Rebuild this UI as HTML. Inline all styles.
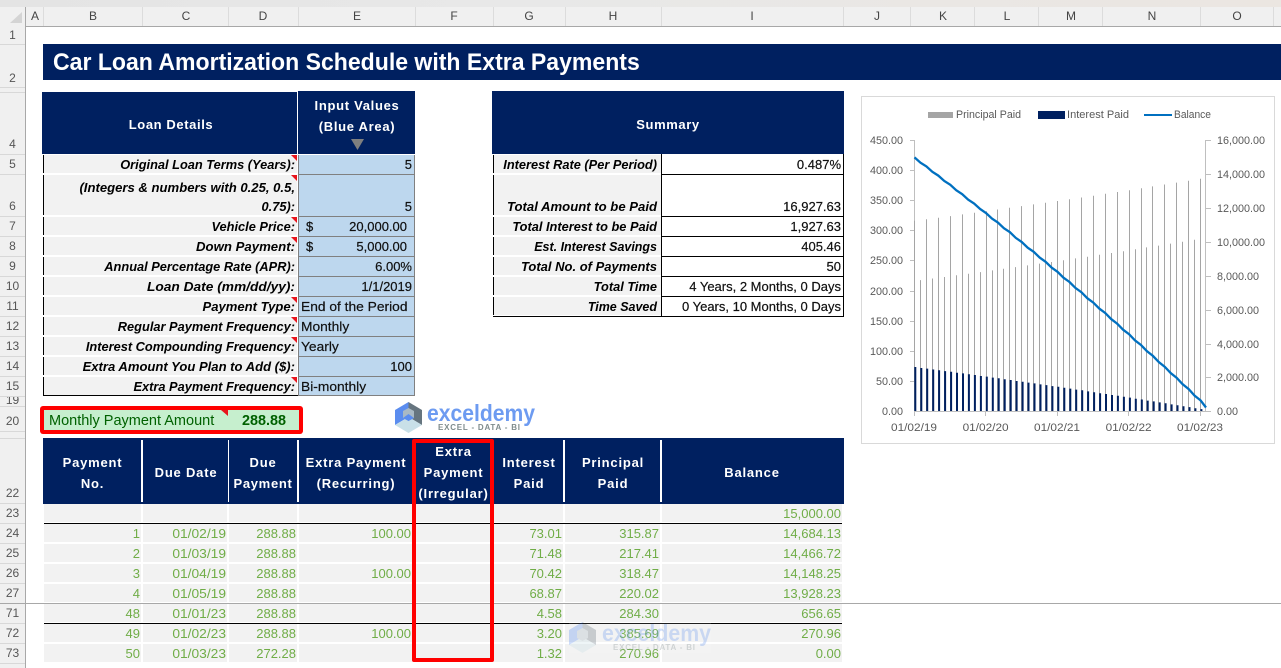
<!DOCTYPE html>
<html><head><meta charset="utf-8"><style>
html,body{margin:0;padding:0;background:#fff}
#p{position:relative;width:1281px;height:668px;overflow:hidden;background:#fff;font-family:"Liberation Sans",sans-serif;font-size:13px;color:#000}
#p div{position:absolute}
.t{white-space:pre;line-height:22px;height:20px}
.r{transform-origin:100% 50%;transform:translateX(-100%)}
.c{transform-origin:50% 50%;transform:translateX(-50%)}
.l{transform-origin:0 50%}
.bi{font-weight:bold;font-style:italic;transform:translateX(-100%) scaleX(.985)}
.g{color:#70ad47}
.d{transform:translateX(-100%) scaleX(1.06)}
.h{color:#fff;font-weight:bold;letter-spacing:.8px}
.hh{color:#fff;font-weight:bold;letter-spacing:.6px}
.ch{color:#444;font-size:12px;top:7px;height:19px;line-height:19px;transform:translateX(-50%)}
.rn{color:#555;font-size:12px;left:0;width:25px;text-align:center;height:16px;line-height:16px}
.hs{top:7px;width:1px;height:19px;background:#dcdcdc}
.rs{left:0;width:25px;height:1px;background:#d8d8d8}
.lb{left:43px;width:253px;background:#f2f2f2;border-left:1px solid #000;height:18px}
.bl{left:299px;width:115px;height:1px;background:#808080}
.sb{left:493px;width:167px;background:#f2f2f2;border-left:1px solid #000;height:18px}
.sl{left:661px;width:183px;height:1px;background:#000}
.v{font-size:13px;color:#111;-webkit-text-stroke:.2px #111}
</style></head><body><div id="p">

<div style="left:0;top:0;width:1281px;height:7px;background:linear-gradient(90deg,#e4e4e4,#e8e8e8 40%,#ebe6e1)"></div>
<div style="left:0;top:7px;width:1281px;height:19px;background:#f0f0f0"></div>
<div style="left:0;top:26px;width:1281px;height:1px;background:#a8a8a8"></div>
<div style="left:0;top:7px;width:25px;height:661px;background:#f0f0f0"></div>
<div style="left:25px;top:7px;width:1px;height:661px;background:#a8a8a8"></div>
<svg style="position:absolute;left:8px;top:11px" width="16" height="13"><polygon points="14,1 14,12 2,12" fill="#d4d4d4"/></svg>

<div class="hs" style="left:43px"></div><div class="hs" style="left:142px"></div><div class="hs" style="left:228px"></div><div class="hs" style="left:298px"></div><div class="hs" style="left:415px"></div><div class="hs" style="left:493px"></div><div class="hs" style="left:565px"></div><div class="hs" style="left:661px"></div><div class="hs" style="left:843px"></div><div class="hs" style="left:910px"></div><div class="hs" style="left:974px"></div><div class="hs" style="left:1038px"></div><div class="hs" style="left:1102px"></div><div class="hs" style="left:1200px"></div><div class="hs" style="left:1273px"></div>
<div class="ch" style="left:35px">A</div><div class="ch" style="left:93px">B</div><div class="ch" style="left:186px">C</div><div class="ch" style="left:263px">D</div><div class="ch" style="left:357px">E</div><div class="ch" style="left:454px">F</div><div class="ch" style="left:529px">G</div><div class="ch" style="left:613px">H</div><div class="ch" style="left:752px">I</div><div class="ch" style="left:877px">J</div><div class="ch" style="left:943px">K</div><div class="ch" style="left:1007px">L</div><div class="ch" style="left:1071px">M</div><div class="ch" style="left:1152px">N</div><div class="ch" style="left:1237px">O</div>

<div class="rs" style="top:44px"></div><div class="rs" style="top:87px"></div><div class="rs" style="top:92px"></div><div class="rs" style="top:154px"></div><div class="rs" style="top:174px"></div><div class="rs" style="top:216px"></div><div class="rs" style="top:236px"></div><div class="rs" style="top:256px"></div><div class="rs" style="top:276px"></div><div class="rs" style="top:296px"></div><div class="rs" style="top:316px"></div><div class="rs" style="top:336px"></div><div class="rs" style="top:356px"></div><div class="rs" style="top:376px"></div><div class="rs" style="top:396px"></div><div class="rs" style="top:406px"></div><div class="rs" style="top:431px"></div><div class="rs" style="top:438px"></div><div class="rs" style="top:503px"></div><div class="rs" style="top:523px"></div><div class="rs" style="top:543px"></div><div class="rs" style="top:563px"></div><div class="rs" style="top:583px"></div><div class="rs" style="top:623px"></div><div class="rs" style="top:643px"></div><div class="rs" style="top:663px"></div>
<div class="rn" style="top:27px">1</div><div class="rn" style="top:70px">2</div><div class="rn" style="top:136px">4</div><div class="rn" style="top:156px">5</div><div class="rn" style="top:198px">6</div><div class="rn" style="top:218px">7</div><div class="rn" style="top:238px">8</div><div class="rn" style="top:258px">9</div><div class="rn" style="top:278px">10</div><div class="rn" style="top:298px">11</div><div class="rn" style="top:318px">12</div><div class="rn" style="top:338px">13</div><div class="rn" style="top:358px">14</div><div class="rn" style="top:378px">15</div><div class="rn" style="top:397px;height:9px;line-height:7px;overflow:hidden">19</div><div class="rn" style="top:413px">20</div><div class="rn" style="top:485px">22</div><div class="rn" style="top:505px">23</div><div class="rn" style="top:525px">24</div><div class="rn" style="top:545px">25</div><div class="rn" style="top:565px">26</div><div class="rn" style="top:585px">27</div><div class="rn" style="top:605px">71</div><div class="rn" style="top:625px">72</div><div class="rn" style="top:645px">73</div>

<!-- title -->
<div style="left:43px;top:44px;width:1238px;height:36px;background:#002060"></div>
<div class="t l" style="left:53px;top:48px;height:30px;line-height:30px;font-size:24px;font-weight:bold;color:#fff;transform:scaleX(.96)">Car Loan Amortization Schedule with Extra Payments</div>

<!-- loan details -->
<div style="left:42px;top:92px;width:255px;height:62px;background:#002060"></div>
<div style="left:298px;top:91px;width:117px;height:63px;background:#002060"></div>
<div class="t c hh" style="left:171px;top:114px">Loan Details</div>
<div class="t c hh" style="left:357px;top:95px;letter-spacing:.7px">Input Values</div>
<div class="t c hh" style="left:357px;top:116px;letter-spacing:.7px">(Blue Area)</div>
<svg style="position:absolute;left:350px;top:139px" width="15" height="11"><polygon points="1,0 14,0 7.5,11" fill="#7f7f7f"/></svg>

<div class="lb" style="top:155px"></div><div class="lb" style="top:175px;height:40px"></div><div class="lb" style="top:217px"></div><div class="lb" style="top:237px"></div><div class="lb" style="top:257px"></div><div class="lb" style="top:277px"></div><div class="lb" style="top:297px"></div><div class="lb" style="top:317px"></div><div class="lb" style="top:337px"></div><div class="lb" style="top:357px"></div><div class="lb" style="top:377px"></div>
<div style="left:43px;top:395px;width:255px;height:1px;background:#000"></div>
<div style="left:299px;top:155px;width:115px;height:241px;background:#bdd7ee"></div>
<div style="left:298px;top:155px;width:1px;height:241px;background:#808080"></div>
<div style="left:414px;top:155px;width:1px;height:241px;background:#808080"></div>
<div class="bl" style="top:174px"></div><div class="bl" style="top:216px"></div><div class="bl" style="top:236px"></div><div class="bl" style="top:256px"></div><div class="bl" style="top:276px"></div><div class="bl" style="top:296px"></div><div class="bl" style="top:316px"></div><div class="bl" style="top:336px"></div><div class="bl" style="top:356px"></div><div class="bl" style="top:376px"></div><div class="bl" style="top:395px"></div>

<div class="t r bi" style="left:295px;top:154px">Original Loan Terms (Years):</div>
<div class="t r bi" style="left:295px;top:177px;transform:translateX(-100%) scaleX(1.008)">(Integers &amp; numbers with 0.25, 0.5,</div>
<div class="t r bi" style="left:295px;top:196px">0.75):</div>
<div class="t r bi" style="left:295px;top:216px">Vehicle Price:</div>
<div class="t r bi" style="left:295px;top:236px;transform:translateX(-100%) scaleX(1.015)">Down Payment:</div>
<div class="t r bi" style="left:295px;top:256px">Annual Percentage Rate (APR):</div>
<div class="t r bi" style="left:295px;top:276px;transform:translateX(-100%) scaleX(1.056)">Loan Date (mm/dd/yy):</div>
<div class="t r bi" style="left:295px;top:296px;transform:translateX(-100%) scaleX(1.005)">Payment Type:</div>
<div class="t r bi" style="left:295px;top:316px">Regular Payment Frequency:</div>
<div class="t r bi" style="left:295px;top:336px">Interest Compounding Frequency:</div>
<div class="t r bi" style="left:295px;top:356px;transform:translateX(-100%) scaleX(1.005)">Extra Amount You Plan to Add ($):</div>
<div class="t r bi" style="left:295px;top:376px">Extra Payment Frequency:</div>

<div class="t r v" style="left:412px;top:154px">5</div>
<div class="t r v" style="left:412px;top:196px">5</div>
<div class="t l v" style="left:306px;top:216px">$</div>
<div class="t r v" style="left:407px;top:216px">20,000.00</div>
<div class="t l v" style="left:306px;top:236px">$</div>
<div class="t r v" style="left:407px;top:236px">5,000.00</div>
<div class="t r v" style="left:412px;top:256px">6.00%</div>
<div class="t r v" style="left:412px;top:276px">1/1/2019</div>
<div class="t l v" style="left:301px;top:296px;transform:scaleX(1.06)">End of the Period</div>
<div class="t l v" style="left:301px;top:316px;transform:scaleX(1.06)">Monthly</div>
<div class="t l v" style="left:301px;top:336px;transform:scaleX(1.06)">Yearly</div>
<div class="t r v" style="left:412px;top:356px">100</div>
<div class="t l v" style="left:301px;top:376px;transform:scaleX(1.06)">Bi-monthly</div>

<svg style="position:absolute;left:285px;top:150px" width="14" height="240"><g fill="#e8141c"><polygon points="6,5 12,5 12,11"/><polygon points="6,25 12,25 12,31"/><polygon points="6,67 12,67 12,73"/><polygon points="6,87 12,87 12,93"/><polygon points="6,147 12,147 12,153"/><polygon points="6,167 12,167 12,173"/><polygon points="6,187 12,187 12,193"/><polygon points="6,227 12,227 12,233"/></g></svg>

<!-- summary -->
<div style="left:492px;top:91px;width:352px;height:63px;background:#002060"></div>
<div class="t c hh" style="left:668px;top:114px">Summary</div>
<div class="sb" style="top:155px"></div><div class="sb" style="top:175px;height:40px"></div><div class="sb" style="top:217px"></div><div class="sb" style="top:237px"></div><div class="sb" style="top:257px"></div><div class="sb" style="top:277px"></div><div class="sb" style="top:297px"></div>
<div style="left:493px;top:316px;width:351px;height:1px;background:#000"></div>
<div style="left:661px;top:154px;width:1px;height:163px;background:#000"></div>
<div style="left:843px;top:154px;width:1px;height:163px;background:#000"></div>
<div class="sl" style="top:174px"></div><div class="sl" style="top:216px"></div><div class="sl" style="top:236px"></div><div class="sl" style="top:256px"></div><div class="sl" style="top:276px"></div><div class="sl" style="top:296px"></div>
<div class="t r bi" style="left:657px;top:154px">Interest Rate (Per Period)</div>
<div class="t r bi" style="left:657px;top:196px;transform:translateX(-100%) scaleX(1.01)">Total Amount to be Paid</div>
<div class="t r bi" style="left:657px;top:216px">Total Interest to be Paid</div>
<div class="t r bi" style="left:657px;top:236px;transform:translateX(-100%) scaleX(.96)">Est. Interest Savings</div>
<div class="t r bi" style="left:657px;top:256px;transform:translateX(-100%) scaleX(1)">Total No. of Payments</div>
<div class="t r bi" style="left:657px;top:276px">Total Time</div>
<div class="t r bi" style="left:657px;top:296px;transform:translateX(-100%) scaleX(.96)">Time Saved</div>
<div class="t r v" style="left:841px;top:154px">0.487%</div>
<div class="t r v" style="left:841px;top:196px">16,927.63</div>
<div class="t r v" style="left:841px;top:216px">1,927.63</div>
<div class="t r v" style="left:841px;top:236px">405.46</div>
<div class="t r v" style="left:841px;top:256px">50</div>
<div class="t r v" style="left:841px;top:276px">4 Years, 2 Months, 0 Days</div>
<div class="t r v" style="left:841px;top:296px">0 Years, 10 Months, 0 Days</div>

<!-- chart -->
<svg style="position:absolute;left:0;top:0" width="1281" height="668" font-family="Liberation Sans, sans-serif" font-size="10.8" fill="#595959">
<rect x="861.5" y="96.5" width="413" height="347" fill="#fff" stroke="#d9d9d9"/>
<rect x="928" y="112" width="25" height="6" fill="#a5a5a5"/><text x="956" y="118" textLength="65" lengthAdjust="spacingAndGlyphs">Principal Paid</text>
<rect x="1038" y="111" width="27" height="8" fill="#002060"/><text x="1067" y="118" textLength="62" lengthAdjust="spacingAndGlyphs">Interest Paid</text>
<rect x="1144" y="114" width="28" height="2" fill="#0070c0"/><text x="1174" y="118" textLength="37" lengthAdjust="spacingAndGlyphs">Balance</text>
<g text-anchor="end"><text x="903" y="144">450.00</text><text x="903" y="174">400.00</text><text x="903" y="204">350.00</text><text x="903" y="234">300.00</text><text x="903" y="264">250.00</text><text x="903" y="295">200.00</text><text x="903" y="325">150.00</text><text x="903" y="355">100.00</text><text x="903" y="385">50.00</text><text x="903" y="415">0.00</text></g>
<g><text x="1217" y="144">16,000.00</text><text x="1217" y="178">14,000.00</text><text x="1217" y="212">12,000.00</text><text x="1217" y="246">10,000.00</text><text x="1217" y="280">8,000.00</text><text x="1217" y="314">6,000.00</text><text x="1217" y="348">4,000.00</text><text x="1217" y="381">2,000.00</text><text x="1217" y="415">0.00</text></g>
<g><text x="891" y="431" textLength="46" lengthAdjust="spacingAndGlyphs">01/02/19</text><text x="962.6" y="431" textLength="46" lengthAdjust="spacingAndGlyphs">01/02/20</text><text x="1034" y="431" textLength="46" lengthAdjust="spacingAndGlyphs">01/02/21</text><text x="1105.6" y="431" textLength="46" lengthAdjust="spacingAndGlyphs">01/02/22</text><text x="1177" y="431" textLength="46" lengthAdjust="spacingAndGlyphs">01/02/23</text></g>
<path fill="none" stroke="#bfbfbf" d="M914.5 140V411.5H1205.5V140M910 140.5h4M910 170.5h4M910 200.5h4M910 230.5h4M910 260.5h4M910 291.5h4M910 321.5h4M910 351.5h4M910 381.5h4M1206 140.5h5M1206 174.5h5M1206 208.5h5M1206 242.5h5M1206 276.5h5M1206 310.5h5M1206 344.5h5M1206 377.5h5M1206 411.5h5M914.5 411v5M985.5 411v5M1057.5 411v5M1128.5 411v5M1200.5 411v5"/>
<path fill="none" stroke="#a5a5a5" stroke-width="1" d="M914.5 220.8V411M920.5 280.1V411M926.5 219.2V411M932.5 278.5V411M938.5 217.7V411M944.5 277V411M950.5 216.1V411M956.5 275.3V411M962.5 214.4V411M968.5 273.7V411M974.5 212.8V411M980.5 272.1V411M986.5 211.2V411M992.5 270.4V411M997.5 209.5V411M1003.5 268.8V411M1009.5 207.8V411M1015.5 267.1V411M1021.5 206.1V411M1027.5 265.4V411M1033.5 204.4V411M1039.5 263.6V411M1045.5 202.7V411M1051.5 262V411M1057.5 201V411M1063.5 260.2V411M1069.5 199.2V411M1075.5 258.4V411M1081.5 197.5V411M1087.5 256.7V411M1093.5 195.7V411M1099.5 254.8V411M1105.5 193.8V411M1111.5 253V411M1117.5 192V411M1123.5 251.2V411M1129.5 190.2V411M1135.5 249.3V411M1141.5 188.3V411M1146.5 247.4V411M1152.5 186.4V411M1158.5 245.6V411M1164.5 184.5V411M1170.5 243.6V411M1176.5 182.6V411M1182.5 241.7V411M1188.5 180.7V411M1194.5 239.8V411M1200.5 178.7V411"/>
<path fill="none" stroke="#002060" stroke-width="2" d="M915.3 367V411M921.3 368V411M927.2 368.6V411M933.2 369.5V411M939.1 370.2V411M945.1 371.1V411M951.1 371.7V411M957 372.7V411M963 373.4V411M968.9 374.3V411M974.9 375V411M980.9 376V411M986.8 376.6V411M992.8 377.6V411M998.7 378.3V411M1004.7 379.3V411M1010.7 380V411M1016.6 381V411M1022.6 381.7V411M1028.5 382.6V411M1034.5 383.4V411M1040.5 384.4V411M1046.4 385.1V411M1052.4 386.1V411M1058.3 386.8V411M1064.3 387.8V411M1070.3 388.6V411M1076.2 389.6V411M1082.2 390.3V411M1088.1 391.4V411M1094.1 392.2V411M1100.1 393.2V411M1106 394V411M1112 395V411M1117.9 395.8V411M1123.9 396.8V411M1129.9 397.6V411M1135.8 398.7V411M1141.8 399.5V411M1147.7 400.6V411M1153.7 401.4V411M1159.7 402.4V411M1165.6 403.3V411M1171.6 404.4V411M1177.5 405.2V411M1183.5 406.3V411M1189.5 407.1V411M1195.4 408.2V411M1201.4 409.1V411"/>
<polyline fill="none" stroke="#0070c0" stroke-width="2.3" points="914.5,157.4 920.5,162.7 926.4,166.4 932.4,171.8 938.3,175.6 944.3,181 950.3,184.8 956.2,190.2 962.2,194.1 968.1,199.6 974.1,203.5 980.1,209 986,213 992,218.6 997.9,222.5 1003.9,228.2 1009.9,232.2 1015.8,237.9 1021.8,242 1027.7,247.7 1033.7,251.8 1039.7,257.6 1045.6,261.8 1051.6,267.6 1057.5,271.8 1063.5,277.7 1069.5,282 1075.4,287.9 1081.4,292.2 1087.3,298.2 1093.3,302.6 1099.3,308.6 1105.2,313 1111.2,319.1 1117.1,323.6 1123.1,329.7 1129.1,334.2 1135,340.4 1141,345 1146.9,351.2 1152.9,355.9 1158.9,362.2 1164.8,366.8 1170.8,373.2 1176.7,377.9 1182.7,384.3 1188.7,389.1 1194.6,395.6 1200.6,400.4 1206,407.5"/>
</svg>

<!-- monthly payment -->
<div style="left:40px;top:406px;width:263px;height:28px;background:#f00;border-radius:3px"></div>
<div style="left:44px;top:410px;width:255px;height:20px;background:#c6efce"></div>
<div class="t l" style="left:49px;top:410px;font-size:14.5px;color:#006100">Monthly Payment Amount</div>
<div class="t r" style="left:286px;top:410px;font-size:14.4px;font-weight:bold;color:#006100">288.88</div>
<svg style="position:absolute;left:220px;top:410px" width="9" height="7"><polygon points="1,0 8,0 8,6" fill="#e8141c"/></svg>

<!-- schedule header -->
<div style="left:43px;top:438px;width:801px;height:66px;background:#002060"></div>
<div style="left:141px;top:440px;width:2px;height:62px;background:#fff"></div>
<div style="left:228px;top:440px;width:1px;height:62px;background:#fff"></div>
<div style="left:297px;top:440px;width:2px;height:62px;background:#fff"></div>
<div style="left:563px;top:440px;width:2px;height:62px;background:#fff"></div>
<div style="left:660px;top:440px;width:2px;height:62px;background:#fff"></div>
<div class="t c h" style="left:92.5px;top:452px">Payment</div><div class="t c h" style="left:92.5px;top:473px">No.</div>
<div class="t c h" style="left:186px;top:462px">Due Date</div>
<div class="t c h" style="left:263px;top:452px">Due</div><div class="t c h" style="left:263px;top:473px;letter-spacing:.7px">Payment</div>
<div class="t c h" style="left:356px;top:452px">Extra Payment</div><div class="t c h" style="left:356px;top:473px">(Recurring)</div>
<div class="t c h" style="left:453.5px;top:441px">Extra</div><div class="t c h" style="left:453.5px;top:462px">Payment</div><div class="t c h" style="left:453.5px;top:483px">(Irregular)</div>
<div class="t c h" style="left:529px;top:452px">Interest</div><div class="t c h" style="left:529px;top:473px">Paid</div>
<div class="t c h" style="left:613px;top:452px">Principal</div><div class="t c h" style="left:613px;top:473px">Paid</div>
<div class="t c h" style="left:752px;top:462px">Balance</div>

<!-- schedule cell background -->
<div style="left:44px;top:504px;width:798px;height:159px;background:repeating-linear-gradient(180deg,#f2f2f2 0,#f2f2f2 18px,#fff 18px,#fff 20px)"></div>
<div style="left:141px;top:504px;width:2px;height:160px;background:#fff"></div>
<div style="left:227px;top:504px;width:2px;height:160px;background:#fff"></div>
<div style="left:297px;top:504px;width:2px;height:160px;background:#fff"></div>
<div style="left:563px;top:504px;width:2px;height:160px;background:#fff"></div>
<div style="left:660px;top:504px;width:2px;height:160px;background:#fff"></div>
<div style="left:44px;top:523px;width:798px;height:1px;background:#000"></div>
<div style="left:44px;top:623px;width:798px;height:1px;background:#000"></div>
<div style="left:0;top:603px;width:1281px;height:1px;background:#a8a8a8"></div>

<div class="t r g" style="left:841px;top:503px">15,000.00</div>

<div class="t r g" style="left:140px;top:523px">1</div><div class="t r g d" style="left:226px;top:523px">01/02/19</div><div class="t r g" style="left:296px;top:523px">288.88</div><div class="t r g" style="left:411px;top:523px">100.00</div><div class="t r g" style="left:562px;top:523px">73.01</div><div class="t r g" style="left:659px;top:523px">315.87</div><div class="t r g" style="left:841px;top:523px">14,684.13</div>
<div class="t r g" style="left:140px;top:543px">2</div><div class="t r g d" style="left:226px;top:543px">01/03/19</div><div class="t r g" style="left:296px;top:543px">288.88</div><div class="t r g" style="left:562px;top:543px">71.48</div><div class="t r g" style="left:659px;top:543px">217.41</div><div class="t r g" style="left:841px;top:543px">14,466.72</div>
<div class="t r g" style="left:140px;top:563px">3</div><div class="t r g d" style="left:226px;top:563px">01/04/19</div><div class="t r g" style="left:296px;top:563px">288.88</div><div class="t r g" style="left:411px;top:563px">100.00</div><div class="t r g" style="left:562px;top:563px">70.42</div><div class="t r g" style="left:659px;top:563px">318.47</div><div class="t r g" style="left:841px;top:563px">14,148.25</div>
<div class="t r g" style="left:140px;top:583px">4</div><div class="t r g d" style="left:226px;top:583px">01/05/19</div><div class="t r g" style="left:296px;top:583px">288.88</div><div class="t r g" style="left:562px;top:583px">68.87</div><div class="t r g" style="left:659px;top:583px">220.02</div><div class="t r g" style="left:841px;top:583px">13,928.23</div>
<div class="t r g" style="left:140px;top:603px">48</div><div class="t r g d" style="left:226px;top:603px">01/01/23</div><div class="t r g" style="left:296px;top:603px">288.88</div><div class="t r g" style="left:562px;top:603px">4.58</div><div class="t r g" style="left:659px;top:603px">284.30</div><div class="t r g" style="left:841px;top:603px">656.65</div>
<div class="t r g" style="left:140px;top:623px">49</div><div class="t r g d" style="left:226px;top:623px">01/02/23</div><div class="t r g" style="left:296px;top:623px">288.88</div><div class="t r g" style="left:411px;top:623px">100.00</div><div class="t r g" style="left:562px;top:623px">3.20</div><div class="t r g" style="left:659px;top:623px">385.69</div><div class="t r g" style="left:841px;top:623px">270.96</div>
<div class="t r g" style="left:140px;top:643px">50</div><div class="t r g d" style="left:226px;top:643px">01/03/23</div><div class="t r g" style="left:296px;top:643px">272.28</div><div class="t r g" style="left:562px;top:643px">1.32</div><div class="t r g" style="left:659px;top:643px">270.96</div><div class="t r g" style="left:841px;top:643px">0.00</div>

<!-- red box -->
<div style="left:412px;top:439px;width:74px;height:215px;border:4px solid #f00;border-radius:2px"></div>

<!-- logos -->
<svg style="position:absolute;left:0;top:0" width="1281" height="668" font-family="Liberation Sans, sans-serif" font-weight="bold">
<g>
<polygon points="408.5,402 395,410 395,425 408.5,417" fill="#5b8def"/>
<polygon points="408.5,402 422,410 422,425 408.5,417" fill="#66757f"/>
<polygon points="395,425 408.5,417 422,425 408.5,433" fill="#c9e0e8"/>
<polygon points="403,411 408.5,408 414,411 414,418 408.5,421 403,418" fill="#a9b9c4"/>
<polygon points="403,418 408.5,414 414,418 408.5,421" fill="#5b8def"/>
<text x="427" y="421" font-size="23" fill="#6d9bf1" textLength="108" lengthAdjust="spacingAndGlyphs">exceldemy</text>
<text x="438" y="430" font-size="8" fill="#7f8c8d" textLength="82">EXCEL - DATA - BI</text>
</g>
<g opacity=".3">
<rect x="569" y="622" width="142" height="31" fill="#fff" opacity=".4"/>
<polygon points="582.5,622 569,630 569,645 582.5,637" fill="#5b8def"/>
<polygon points="582.5,622 596,630 596,645 582.5,637" fill="#66757f"/>
<polygon points="569,645 582.5,637 596,645 582.5,653" fill="#c9e0e8"/>
<polygon points="577,631 582.5,628 588,631 588,638 582.5,641 577,638" fill="#a9b9c4"/>
<text x="602" y="641" font-size="23" fill="#6d9bf1" textLength="109" lengthAdjust="spacingAndGlyphs">exceldemy</text>
<text x="613" y="650" font-size="8" fill="#7f8c8d" textLength="82">EXCEL - DATA - BI</text>
</g>
</svg>

</div></body></html>
